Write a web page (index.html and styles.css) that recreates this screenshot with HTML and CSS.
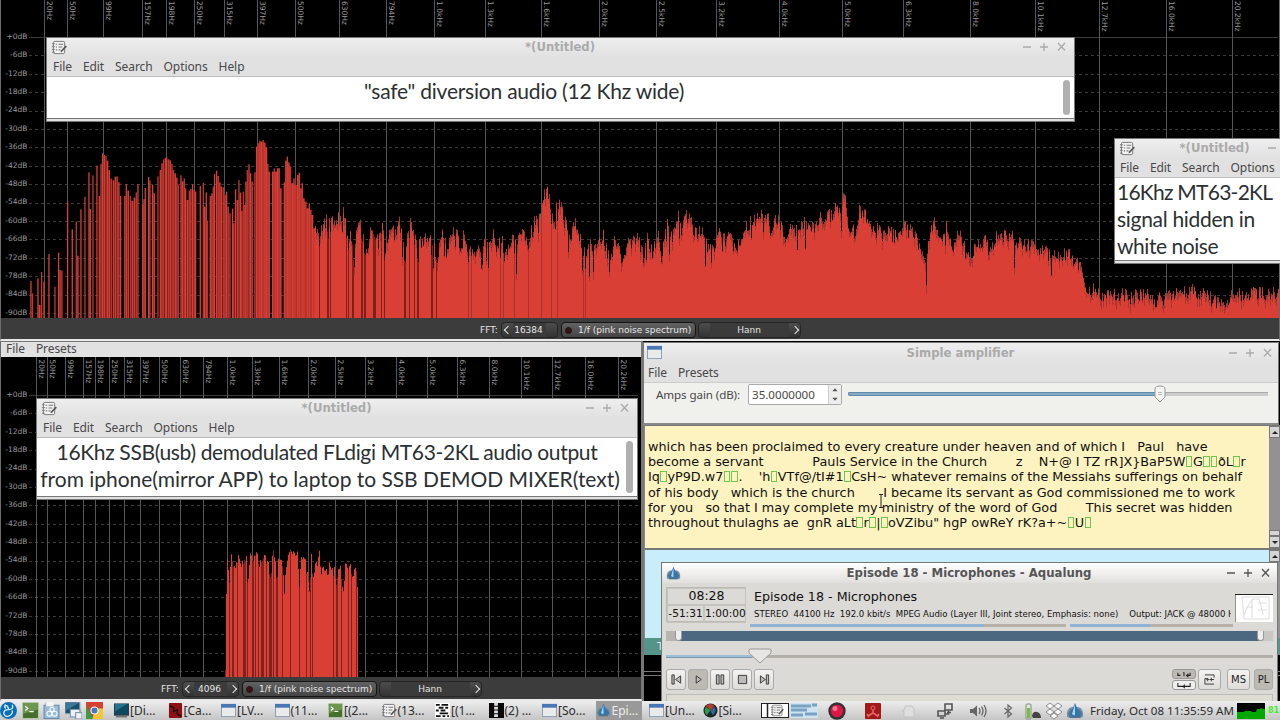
FILE: index.html
```html
<!DOCTYPE html>
<html lang="en">
<head>
    <meta charset="UTF-8">
    <meta name="viewport" content="width=device-width, initial-scale=1.0">
    <title>Desktop</title>
    <link rel="stylesheet" href="styles.css">
</head>
<body>
    <!-- shared icons -->
    <svg class="defs" width="0" height="0">
        <symbol id="i-note" viewBox="0 0 16 16">
            <rect x="1.5" y="1.5" width="12" height="13" rx="1.5" fill="#f2f2f2" stroke="#777"/>
            <path d="M0 4h3M0 7h3M0 10h3M0 13h3" stroke="#777"/>
            <path d="M4 4.5h1.5M7 4.5h5M4 7.5h1.5M7 7.5h4M4 10.5h1.5M7 10.5h2" stroke="#777" stroke-width="1.2"/>
            <path d="M15.2 6.5L9.5 12.5" stroke="#555" stroke-width="1.8"/>
        </symbol>
        <symbol id="i-win" viewBox="0 0 16 16">
            <rect x=".5" y="1.5" width="15" height="13" fill="#e9eaea" stroke="#8a9bb5"/>
            <rect x="0" y="1" width="16" height="4" fill="#4a76b4"/>
        </symbol>
        <symbol id="i-term" viewBox="0 0 16 16">
            <rect x=".5" y=".5" width="15" height="15" rx="1" fill="#456f2c" stroke="#b7c7a7"/>
            <path d="M1 1h14v6L1 11z" fill="#6d9651"/>
            <path d="M3 4l2.5 2L3 8M7 9h4" fill="none" stroke="#fff" stroke-width="1.2"/>
        </symbol>
        <symbol id="i-aqua" viewBox="0 0 18 16">
            <path d="M1 14Q0 5 6 4h6q6 1 5 10l-3 1H4z" fill="#7893a6"/>
            <path d="M2 11q2-5 4-5h6q2 0 4 5l-2 4H4z" fill="#54738a"/>
            <path d="M9 0L4 12q5 3 10 0z" fill="#2d75b7"/>
            <path d="M9 1L6 11q2 2 3 1z" fill="#a7d4ee"/>
        </symbol>
    </svg>

    <div class="desktop">
        <section class="analyzer analyzer-top">
            <svg class="plot" id="plotTop" width="1280" height="318"></svg>
            <div class="fft-bar">
                <span class="fft-label">FFT:</span>
                <div class="spin"><i class="arrow prev"></i><span>16384</span><i class="arrow"></i></div>
                <div class="toggle"><i class="led"></i><span>1/f (pink noise spectrum)</span></div>
                <div class="spin wide"><i class="arrow"></i><span>Hann</span><i class="arrow next"></i></div>
            </div>
        </section>

        <section class="analyzer analyzer-bottom">
            <nav class="menu"><span>File</span><span>Presets</span></nav>
            <svg class="plot" id="plotBottom" width="640" height="320"></svg>
            <div class="fft-bar">
                <span class="fft-label">FFT:</span>
                <div class="spin"><i class="arrow prev"></i><span>4096</span><i class="arrow next"></i></div>
                <div class="toggle"><i class="led"></i><span>1/f (pink noise spectrum)</span></div>
                <div class="spin wide"><i class="arrow"></i><span>Hann</span><i class="arrow next"></i></div>
            </div>
        </section>

        <section class="window note note-safe">
            <header class="titlebar">
                <svg class="app-icon"><use href="#i-note"/></svg>
                <h2>*(Untitled)</h2>
                <svg class="controls" viewBox="0 0 46 12"><path d="M2 6h8M19 6h8M23 2v8M37 2l7 7.500M44 2l-7 7.500"/></svg>
            </header>
            <nav class="menu"><span>File</span><span>Edit</span><span>Search</span><span>Options</span><span>Help</span></nav>
            <div class="note-body"><p><span>"safe" diversion audio (12 Khz wide)</span></p><i class="scroll"></i></div>
        </section>

        <section class="window note note-hidden">
            <header class="titlebar">
                <svg class="app-icon"><use href="#i-note"/></svg>
                <h2>*(Untitled)</h2>
                <svg class="controls" viewBox="0 0 46 12"><path d="M2 6h8M19 6h8M23 2v8M37 2l7 7.500M44 2l-7 7.500"/></svg>
            </header>
            <nav class="menu"><span>File</span><span>Edit</span><span>Search</span><span>Options</span></nav>
            <div class="note-body"><p><span class="h1">16Khz MT63-2KL</span><br><span class="h2">signal hidden in</span><br><span class="h3">white noise</span></p></div>
        </section>

        <section class="window note note-ssb">
            <header class="titlebar">
                <svg class="app-icon"><use href="#i-note"/></svg>
                <h2>*(Untitled)</h2>
                <svg class="controls" viewBox="0 0 46 12"><path d="M2 6h8M19 6h8M23 2v8M37 2l7 7.500M44 2l-7 7.500"/></svg>
            </header>
            <nav class="menu"><span>File</span><span>Edit</span><span>Search</span><span>Options</span><span>Help</span></nav>
            <div class="note-body"><p><span class="s1">16Khz SSB(usb) demodulated FLdigi MT63-2KL audio output</span><br><span class="s2">from iphone(mirror APP) to laptop to SSB DEMOD MIXER(text)</span></p><i class="scroll"></i></div>
        </section>

        <section class="fldigi">
            <div class="pane rx">
                <div class="received">
                    <p>which has been proclaimed to every creature under heaven and of which I   Paul   have</p>
                    <p>become a servant            Pauls Service in the Church       z    N+@ I TZ rR]X}BaP5W<b></b>G<b></b><b></b>ðL<b></b>r</p>
                    <p>Iq<b></b>yP9D.w7<b></b><b></b>.    'h<b></b>VTf@/tI#1<b></b>CsH~ whatever remains of the Messiahs sufferings on behalf</p>
                    <p>of his body   which is the church       I became its servant as God commissioned me to work</p>
                    <p>for you   so that I may complete my ministry of the word of God       This secret was hidden</p>
                    <p>throughout thulaghs ae  gnR aLt<b></b>r<b></b>|<b></b>oVZibu" hgP owReY rK?a+~<b></b>U<b></b></p>
                </div>
                <div class="scroller"><i class="up"></i><i class="thumb"></i><i class="down"></i></div>
            </div>
            <div class="pane tx"><div class="scroller"><i class="up"></i></div></div>
            <div class="tx-bar">T</div>
            <div class="waterfall"></div>
            <svg class="caret" viewBox="0 0 6 14"><path d="M1 .5h4M3 .5v13M1 13.500h4"/></svg>
        </section>

        <section class="window amp">
            <header class="titlebar">
                <svg class="app-icon"><use href="#i-win"/></svg>
                <h2>Simple amplifier</h2>
                <svg class="controls" viewBox="0 0 46 12"><path d="M2 6h8M19 6h8M23 2v8M37 2l7 7.500M44 2l-7 7.500"/></svg>
            </header>
            <nav class="menu"><span>File</span><span>Presets</span></nav>
            <div class="gain">
                <label>Amps gain (dB):</label>
                <div class="number"><span>35.0000000</span><svg viewBox="0 0 10 18"><path d="M2.500 6h5L5 3zM2.500 12h5L5 15z"/></svg></div>
                <div class="slider"><i class="fill"></i><svg class="knob" viewBox="0 0 12 18"><path d="M1 4q0-3 5-3t5 3v8l-5 5-5-5z" fill="#f4f4f2" stroke="#999"/><path d="M4 7.500h4M4 9.500h4" stroke="#bbb"/></svg></div>
            </div>
        </section>

        <section class="window aqualung">
            <header class="titlebar">
                <svg class="app-icon"><use href="#i-aqua"/></svg>
                <h2>Episode 18 - Microphones - Aqualung</h2>
                <svg class="controls" viewBox="0 0 46 12"><path d="M2 6h8M19 6h8M23 2v8M37 2l7 7.500M44 2l-7 7.500"/></svg>
            </header>
            <div class="track">
                <div class="time"><div>08:28</div><div>-51:31</div><div>1:00:00</div></div>
                <div class="info">
                    <div class="name">Episode 18 - Microphones</div>
                    <div class="meta"><span>STEREO&nbsp; 44100 Hz&nbsp; 192.0 kbit/s&nbsp; MPEG Audio (Layer III, Joint stereo, Emphasis: none)</span><span>Output: JACK @ 48000 H</span></div>
                    <div class="levels"><i class="vol"></i><i class="bal"></i></div>
                </div>
                <svg class="cover" viewBox="0 0 38 28"><rect width="38" height="28" fill="#fff"/><path d="M0 28V.5h38" fill="none" stroke="#222"/><path d="M7 3h27v22H9zM9 21q5-13 9-16h6q2 5 4 16M17 5v19M12 13h6M23 9h9M23 16h9" fill="none" stroke="#ddd"/></svg>
            </div>
            <div class="loop"><i></i><i></i></div>
            <div class="seek"><i class="fill"></i><svg class="knob" viewBox="0 0 24 16"><path d="M1 5V2q0-1 2-1h18q2 0 2 1v3L12 15z" fill="#e7e6e3" stroke="#999"/></svg></div>
            <div class="buttons">
                <span class="btn"><svg viewBox="0 0 12 12"><path d="M1 1h2.500v10H1zM10.500 2v8L5 6z"/></svg></span>
                <span class="btn on"><svg viewBox="0 0 12 12"><path d="M3.500 2v8L9 6z"/></svg></span>
                <span class="btn"><svg viewBox="0 0 12 12"><path d="M1.500 1h3v10h-3zM6.500 1h3v10h-3z"/></svg></span>
                <span class="btn"><svg viewBox="0 0 12 12"><path d="M1.500 1.500h9v9h-9z"/></svg></span>
                <span class="btn"><svg viewBox="0 0 12 12"><path d="M1.500 2v8L7 6zM8 1h2.500v10H8z"/></svg></span>
                <span class="spacer"></span>
                <span class="repeat">
                    <i class="on"><svg viewBox="0 0 16 8"><path d="M1 2v3h3M15 2v3h-4M13 3l-2 2 2 2M7 2h1v4"/></svg></i>
                    <i><svg viewBox="0 0 16 8"><path d="M1 1v4h14V1M9 3L7 5l2 2"/></svg></i>
                </span>
                <span class="btn shuffle"><svg viewBox="0 0 12 12"><path d="M1 1h10v3M11 11H1V5h3v3M2.500 6.500L4 5l1.500 1.500M8 4v4M6 6h5" fill="none"/></svg></span>
                <span class="btn text">MS</span>
                <span class="btn text on pl">PL</span>
            </div>
            <div class="playlist"></div>
        </section>

        <footer class="taskbar">
            <div class="launchers">
                <svg viewBox="0 0 18 18"><circle cx="9" cy="9" r="9" fill="#0b6eb5"/><path d="M5 3q4 1 4 5M13 3q2 5-4 5-5 0-5 4 1 4 5 3 5-2 4-6M6 7q-2-2 0-4" fill="none" stroke="#d7efff" stroke-width="1.400"/></svg>
                <svg viewBox="0 0 16 16"><use href="#i-term"/></svg>
                <svg viewBox="0 0 16 16"><path d="M1 3h2V1h6v2h6v12.500H1z" fill="#9bbcd6" stroke="#6589a5"/><rect x="3" y="0" width="7" height="4" fill="#f4f6f8"/><circle cx="6" cy="11" r="2.300" fill="none" stroke="#f5fbff"/><circle cx="11" cy="11" r="2.300" fill="none" stroke="#f5fbff"/><circle cx="8.500" cy="7" r="2" fill="none" stroke="#f5fbff"/></svg>
                <svg viewBox="0 0 16 16"><rect width="14" height="11" fill="#174e6c" stroke="#8ca6b4"/><path d="M1 1h12L1 8z" fill="#3b7898"/><rect x="5" y="7" width="9" height="7" fill="#eef1f5" stroke="#7892ad"/><rect x="10" y="10" width="6" height="6" fill="#eef1f5" stroke="#7892ad"/></svg>
                <svg viewBox="0 0 16 16"><rect width="16" height="16" fill="#d5402f"/><path d="M0 3l7 13H0z" fill="#3b9c48"/><path d="M9 6h7v10H6z" fill="#f1c736"/><circle cx="8" cy="8" r="3.800" fill="#fff"/><circle cx="8" cy="8" r="2.800" fill="#3f79c4"/></svg>
            </div>
            <div class="tasks">
                <span><svg viewBox="0 0 16 16"><rect x=".5" y="1" width="15" height="12" fill="#0e4760" stroke="#29363e"/><path d="M1 1h13L1 9z" fill="#24718b"/><path d="M2 14.500h12" stroke="#777" stroke-width="2"/></svg>[Di...</span>
                <span><svg viewBox="0 0 16 16"><rect x="1" width="14" height="16" rx="1" fill="#8c1116"/><path d="M2 3l4 2v4l4-2v5l4 2" fill="none" stroke="#1d0606" stroke-width="1.500"/></svg>[Ca...</span>
                <span><svg viewBox="0 0 16 16"><use href="#i-win"/></svg>[LV...</span>
                <span><svg viewBox="0 0 16 16"><use href="#i-win"/></svg>(11...</span>
                <span><svg viewBox="0 0 16 16"><use href="#i-term"/></svg>[(2...</span>
                <span><svg viewBox="0 0 16 16"><use href="#i-note"/></svg>(13...</span>
                <span><svg viewBox="0 0 16 16"><rect width="16" height="16" fill="#fff"/><path d="M1 2h4M7 2h7M4 5h5M11 5h3M1 8h3M6 8h5M5 11h9M1 14h5M8 14h3M13 14h2" stroke="#111" stroke-width="2"/></svg>[(1...</span>
                <span><svg viewBox="0 0 16 16"><rect width="16" height="16" fill="#090909"/><path d="M7.500 0v16" stroke="#ddd" stroke-width="4" stroke-dasharray="3 1"/></svg>(2) ...</span>
                <span><svg viewBox="0 0 16 16"><use href="#i-win"/></svg>[So...</span>
                <span class="active"><svg viewBox="0 0 18 16"><use href="#i-aqua"/></svg>Epi...</span>
                <span><svg viewBox="0 0 16 16"><use href="#i-win"/></svg>[Un...</span>
                <span><svg viewBox="0 0 16 16"><circle cx="8" cy="8" r="7.500" fill="#1b2528"/><path d="M8 8L3 3q5-4 9 0z" fill="#b83d2c"/><path d="M8 8l-5-4q-3 5 1 9z" fill="#2d9b48"/><path d="M8 8l4-4q4 5-2 9z" fill="#2d66a0"/></svg>[Si...</span>
            </div>
            <svg class="pager" viewBox="0 0 57 17"><rect x=".5" y="1.500" width="27" height="14" fill="#fff" stroke="#222"/><path d="M6.500 1v15" stroke="#222" stroke-width="1.500"/><rect x="29" y="1" width="28" height="15" fill="#cfe3f0"/><path d="M30 4h20M30 8h16M30 13h12M44 12h12M51 3h5" stroke="#7aa3c3" stroke-width="3"/><svg x="10" y="2" width="13" height="13"><use href="#i-note"/></svg></svg>
            <div class="tray">
                <svg viewBox="0 0 18 18"><circle cx="9" cy="9" r="8.700" fill="#333"/><circle cx="9" cy="9" r="6.200" fill="#e01645"/><circle cx="7" cy="6.500" r="2.500" fill="#fa7290"/></svg>
                <svg viewBox="0 0 18 18"><rect x="1" y="1" width="16" height="16" rx="1" fill="#a3171b"/><circle cx="9" cy="6" r="2" fill="none" stroke="#e8686a"/><path d="M9 8v3l-5 3M9 11l5 3M3 12l2 3M15 12l-2 3" stroke="#e8686a" stroke-width="1.500" fill="none"/></svg>
                <svg viewBox="0 0 18 18"><path d="M5 4h7l2 3v8H4V9H2l3-2z" fill="#dedede" stroke="#c2c2c2"/></svg>
                <svg viewBox="0 0 18 18"><g fill="none" stroke="#555" stroke-width="1.600"><path d="M9 2h7v6H9zM2 9h7v5H2zM12.500 8v4H9M4 16h4M11 10.500h4"/></g></svg>
                <svg viewBox="0 0 18 18"><path d="M1 7h3l4-3.500v11L4 11H1z" fill="#666"/><path d="M10 6q2 3 0 6M12.500 4.500q3 4.500 0 9M15 3q4 6 0 12" fill="none" stroke="#666" stroke-width="1.300"/></svg>
                <svg viewBox="0 0 18 18"><path d="M3.500 6l7 6L7 15V3l3.500 3-7 6" fill="none" stroke="#666" stroke-width="1.200"/></svg>
                <svg viewBox="0 0 18 18"><rect x="2" y="2" width="5" height="15" rx="1" fill="#d9ecc6" stroke="#888"/><rect x="3" y="6" width="3" height="10" fill="#76bd42"/><path d="M8 14q1-5 5-4t4 6H9z" fill="#444"/></svg>
                <svg viewBox="0 0 18 18"><path d="M5 1l4 3-4 3-4-3zM13 1l4 3-4 3-4-3zM5 7l4 3-4 3-4-3zM13 7l4 3-4 3-4-3zM9 11l4 3-4 3-4-3z" fill="#f7f7f7" stroke="#777" stroke-width=".8"/></svg>
                <svg viewBox="0 0 18 16"><use href="#i-aqua"/></svg>
            </div>
            <time>Friday, Oct 08 11:35:59 AM</time>
            <svg class="cpu" viewBox="0 0 28 16"><rect width="28" height="16" fill="#000"/><path d="M0 16V9h7l1-1h6l1 1h4l1-3h3l1-1 2 1h2v10z" fill="#00a800"/></svg>
            <span class="temp">81</span>
        </footer>
    </div>
    <script src="spectrum.js"></script>
</body>
</html>
```
FILE: styles.css
```css
* {
    margin: 0;
    padding: 0;
    box-sizing: border-box;
}

body {
    width: 1280px;
    height: 720px;
    overflow: hidden;
    background: #000;
    font-family: "DejaVu Sans", sans-serif;
}

i {
    font-style: normal;
}

.defs {
    position: absolute;
}

.desktop {
    position: relative;
    width: 1280px;
    height: 720px;
    overflow: hidden;
}

/* spectrum analyzers */
.analyzer {
    position: absolute;
    left: 0;
    display: flex;
    flex-direction: column;
    background: #000;
    border-left: 1px solid #6b6b6b;
    border-bottom: 2px solid #e8e8e8;
}

.analyzer-top {
    top: 0;
    width: 1280px;
    height: 341px;
    border-right: 1px solid #6b6b6b;
}

.analyzer-bottom {
    top: 341px;
    width: 643px;
    height: 360px;
    border-top: 1px solid #777;
    border-right: 2px solid #777;
}

.plot {
    display: block;
    flex: none;
    margin-left: -1px;
}

.plot text {
    font-size: 7.5px;
    fill: #999;
}

.fft-bar {
    flex: 1;
    display: flex;
    align-items: center;
    padding: 3px 0 0 479px;
    gap: 3px;
    background: #3c3c3c;
    color: #e6e6e6;
    font-size: 9px;
}

.analyzer-bottom .fft-bar {
    padding-left: 160px;
    padding-top: 2px;
}

.fft-label {
    width: 18px;
    white-space: nowrap;
}

.spin,
.toggle {
    display: flex;
    align-items: center;
    height: 16px;
    border: 1px solid #252525;
    border-radius: 4px;
    background: linear-gradient(#4d4d4d, #333);
    white-space: nowrap;
}

.spin {
    width: 57px;
    justify-content: space-between;
}

.spin span {
    flex: 1;
    text-align: center;
    line-height: 14px;
    padding-right: 2px;
    background: #3b3b3b;
}

.spin.wide {
    width: 103px;
    margin-left: -1px;
}

.spin.wide span {
    padding-right: 1px;
}

.arrow {
    display: flex;
    align-items: center;
    justify-content: center;
    width: 11px;
    height: 14px;
}

.prev::before,
.next::before {
    content: "";
    width: 5px;
    height: 5px;
    border: solid #e6e6e6;
    border-width: 0 0 1.5px 1.5px;
    transform: rotate(45deg);
}

.next::before {
    transform: rotate(225deg);
}

.toggle {
    width: 135px;
    gap: 6px;
    padding-left: 3px;
    border: 1.5px solid #151515;
    background: linear-gradient(#626262, #444);
}

.led {
    width: 7px;
    height: 7px;
    border-radius: 50%;
    background: #381317;
    border: 1px solid #241214;
}

/* windows */
.window {
    position: absolute;
    display: flex;
    flex-direction: column;
    background: #e1e1e1;
    border: 1px solid #777;
}

.titlebar {
    display: flex;
    align-items: center;
    flex: none;
    height: 19px;
    padding: 0 7px 1px 5px;
    background: linear-gradient(#eee, #e1e1e1);
}

.titlebar h2 {
    flex: 1;
    padding-left: 32px;
    text-align: center;
    font-size: 11.7px;
    color: #aaa;
    white-space: nowrap;
}

.app-icon {
    width: 15px;
    height: 15px;
}

.controls {
    width: 46px;
    height: 12px;
    fill: none;
    stroke: #aaa;
    stroke-width: 1.3;
}

.menu {
    display: flex;
    flex: none;
    align-items: center;
    gap: 11px;
    height: 19px;
    padding-left: 6px;
    background: #e1e1e1;
    color: #484848;
    font-family: "Noto Sans", sans-serif;
    font-size: 12px;
    letter-spacing: -.08px;
}

.analyzer-bottom .menu {
    height: 15px;
    padding: 0 0 2px 5px;
}

.note-body {
    display: flex;
    flex: 1;
    background: #fff;
    border-top: 1px solid #bbb;
    border-bottom: 1px solid #777;
    margin-bottom: 2px;
    color: #2c3032;
    font-family: Lato, sans-serif;
    font-size: 21px;
    line-height: 27px;
    white-space: nowrap;
}

.note-body p {
    flex: 1;
    text-align: center;
}

.scroll {
    width: 7px;
    margin: 3px 4px 3px 0;
    border-radius: 4px;
    background: #b0b0b0;
}

.note-safe {
    left: 46px;
    top: 37px;
    width: 1029px;
    height: 85px;
}

.note-safe p {
    padding: 0 62px 0 0;
    letter-spacing: -.22px;
}

.note-hidden {
    left: 1114px;
    top: 138px;
    width: 220px;
    height: 126px;
}

.note-hidden h2 {
    padding-left: 28px;
}

.note-hidden .controls {
    margin-right: 14px;
}

.note-hidden .menu {
    padding-left: 5px;
}

.note-hidden p {
    text-align: left;
    padding-left: 2px;
}

.note-hidden .h1 {
    letter-spacing: -.75px;
}

.note-hidden .h2 {
    letter-spacing: -.3px;
}

.note-hidden .h3 {
    letter-spacing: -.45px;
}

.note-ssb {
    left: 36px;
    top: 398px;
    width: 602px;
    height: 102px;
}

.note-ssb p {
    padding-right: 3px;
}

.note-ssb .s1 {
    margin-right: 6px;
    letter-spacing: -.35px;
}

.note-ssb .s2 {
    letter-spacing: -.03px;
}

/* fldigi */
.fldigi {
    position: absolute;
    left: 642px;
    top: 425px;
    width: 638px;
    height: 276px;
    display: flex;
    flex-direction: column;
    border-left: 2px solid #777;
    background: #000;
}

.pane {
    display: flex;
    justify-content: space-between;
    border-top: 1px solid #777;
    border-left: 1px solid #888;
}

.rx {
    height: 123px;
    background: #fdf3c0;
}

.received {
    padding: 13px 0 0 3px;
    color: #111;
    font-size: 12.8px;
    line-height: 15.2px;
    white-space: pre;
}

.received p {
    height: 15.2px;
}

.rx .received {
    display: flex;
    flex-direction: column;
}

.received b {
    display: inline-block;
    width: 6.5px;
    height: 11px;
    margin: 0 .5px;
    border: 1px solid #6cc74c;
    vertical-align: -1px;
}

.tx {
    justify-content: flex-end;
    height: 90px;
    background: #c8eefc;
    border-top: 2px solid #777;
}

.scroller {
    display: flex;
    flex-direction: column;
    width: 11px;
    background: #929292;
}

.scroller i {
    display: flex;
    align-items: center;
    justify-content: center;
    height: 12px;
    border: 1px solid #777;
    background: #d5d5d5;
}

.up::before,
.down::before {
    content: "";
    border: 3px solid transparent;
    border-top: 0;
    border-bottom: 3px solid #222;
}

.down::before {
    transform: rotate(180deg);
}

.scroller .thumb {
    height: 6px;
    margin-top: auto;
}

.tx-bar {
    height: 17px;
    padding-left: 13px;
    background: #549489;
    color: #d6efe8;
    font-size: 11px;
    line-height: 17px;
}

.waterfall {
    flex: 1;
    background: linear-gradient(#000 16px, #777 16px, #777 17px, #000 17px, #000 20px, #777 20px, #777 21px, #000 21px);
}

.caret {
    position: absolute;
    left: 234px;
    top: 69px;
    width: 6px;
    height: 14px;
    fill: none;
    stroke: #222;
}

/* amplifier */
.amp {
    left: 642px;
    top: 342px;
    width: 637px;
    height: 83px;
    border-left-width: 2px;
    background: #f0f0ed;
    border-bottom: 2px solid #888;
}

.amp .titlebar {
    height: 20px;
    padding: 0 5px 1px 3px;
}

.amp .menu {
    height: 20px;
    padding-left: 4px;
    border-bottom: 1px solid #ccc;
}

.gain {
    display: flex;
    align-items: center;
    height: 24px;
    margin-top: -1px;
    padding: 0 10px 0 12px;
    color: #484848;
    font-family: "Noto Sans", sans-serif;
    font-size: 11.6px;
    white-space: nowrap;
}

.gain label {
    width: 92px;
    letter-spacing: -.1px;
}

.number {
    display: flex;
    width: 94px;
    height: 21px;
    margin-right: 6px;
    border: 1px solid #aaa;
    border-radius: 2px;
    background: #fff;
    line-height: 19px;
}

.number span {
    flex: 1;
    padding-left: 3px;
    border-right: 1px solid #ccc;
}

.number svg {
    width: 12px;
    height: 19px;
    fill: #555;
    background: #eee;
}

.slider {
    position: relative;
    flex: 1;
    height: 4px;
    background: #ccc;
    border-top: 1px solid #aaa;
}

.slider .fill {
    position: absolute;
    left: 0;
    top: -1px;
    width: 312px;
    height: 4px;
    background: #85aac6;
    border: 1px solid #608aa9;
    border-radius: 2px;
}

.slider .knob {
    position: absolute;
    left: 306px;
    top: -8px;
    width: 12px;
    height: 18px;
}

/* aqualung */
.aqualung {
    left: 661px;
    top: 562px;
    width: 617px;
    height: 150px;
    background: #dcdad6;
}

.aqualung .titlebar {
    height: 20px;
    padding: 0 6px 0 4px;
    background: linear-gradient(#fff, #e0dfdc);
}

.aqualung h2 {
    color: #555;
}

.aqualung .controls {
    stroke: #555;
}

.track {
    display: flex;
    flex: none;
    height: 44px;
    padding: 4px 4px 0;
    color: #111;
}

.time {
    display: grid;
    grid-template-columns: 37px 42px;
    grid-template-rows: 17px 18px;
    width: 80px;
    height: 35px;
    border: 1px solid #bcbab5;
    text-align: center;
    font-size: 10.6px;
    line-height: 15px;
}

.time div {
    border: 1px solid #c5c3be;
}

.time div:first-child {
    grid-column: 1 / 3;
    font-size: 12.5px;
    line-height: 13px;
}

.info {
    flex: 1;
    min-width: 0;
    padding-left: 4px;
}

.name {
    padding-left: 4px;
    font-size: 12.7px;
    line-height: 19px;
}

.meta {
    display: flex;
    gap: 11px;
    width: 477px;
    margin-left: 4px;
    overflow: hidden;
    font-size: 8.55px;
    line-height: 16px;
    white-space: nowrap;
}

.levels {
    display: flex;
    gap: 4px;
    padding-top: 2px;
}

.levels i {
    width: 316px;
    height: 3px;
    background: linear-gradient(90deg, #8fb3d2 74%, #b8b1aa 74%);
}

.levels .bal {
    width: 163px;
    background: linear-gradient(90deg, #8fb3d2 50%, #b8b1aa 50%);
}

.cover {
    width: 38px;
    height: 28px;
    margin-top: 7px;
}

.loop {
    display: flex;
    flex: none;
    justify-content: space-between;
    height: 10px;
    margin: 4px 4px 0;
    padding: 0 9px;
    background: linear-gradient(90deg, #b9b5ae 12px, #4c6880 12px, #4c6880 595px, #c9c7c3 595px);
}

.loop i {
    width: 7px;
    height: 10px;
    background: #eee;
    border: 1px solid #999;
    border-top: 0;
    border-radius: 0 0 4px 4px;
}

.seek {
    position: relative;
    flex: none;
    height: 3px;
    margin: 14px 4px 0;
    background: #b1afa8;
}

.seek .fill {
    display: block;
    width: 86px;
    height: 3px;
    background: #9fbfd8;
    border-bottom: 1px solid #7898b0;
}

.seek .knob {
    position: absolute;
    left: 82px;
    top: -7px;
    width: 24px;
    height: 16px;
}

.buttons {
    display: flex;
    flex: none;
    gap: 2px;
    margin: 11px 4px 0;
}

.btn {
    display: flex;
    align-items: center;
    justify-content: center;
    width: 20px;
    height: 21px;
    border: 1px solid #aaa;
    border-radius: 3px;
    background: linear-gradient(#f3f3f1, #dedcd8);
}

.btn svg {
    width: 11px;
    height: 11px;
    fill: #bbb;
    stroke: #333;
    stroke-width: 1;
}

.btn.on,
.repeat .on {
    background: #bdbab4;
}

.btn.text {
    width: 23px;
    margin-left: 4px;
    color: #222;
    font-size: 10px;
}

.btn.pl {
    width: 19px;
    margin-left: 2px;
}

.spacer {
    flex: 1;
}

.repeat {
    display: flex;
    flex-direction: column;
    gap: 1px;
    width: 24px;
}

.repeat i {
    display: flex;
    align-items: center;
    justify-content: center;
    height: 10px;
    border: 1px solid #999;
    border-radius: 3px;
    background: #eee;
}

.repeat svg {
    width: 14px;
    height: 7px;
    fill: none;
    stroke: #222;
    stroke-width: 1.2;
}

.shuffle {
    width: 23px;
}

.playlist {
    flex: 1;
    margin: 4px 4px 0;
    border: 1px solid #bbb;
    background: #deddd3;
}

/* taskbar */
.taskbar {
    position: absolute;
    left: 0;
    top: 701px;
    width: 1280px;
    height: 19px;
    display: flex;
    align-items: center;
    background: linear-gradient(#ededed, #c5c5c5);
    color: #2c2c2c;
    font-family: "Noto Sans", sans-serif;
    font-size: 12px;
    white-space: nowrap;
}

.launchers {
    display: flex;
    flex: none;
    gap: 4.5px;
    width: 114px;
}

.launchers svg {
    width: 17px;
    height: 17px;
}

.tasks {
    display: flex;
    flex: none;
    width: 647px;
}

.tasks span {
    display: flex;
    align-items: center;
    gap: 1px;
    flex: none;
    width: 53.5px;
    height: 19px;
}

.tasks svg {
    flex: none;
    width: 15px;
    height: 15px;
}

.tasks .active {
    width: 46px;
    margin-right: 7.5px;
    background: #999;
    color: #eee;
}

.pager {
    flex: none;
    width: 57px;
    height: 17px;
}

.tray {
    display: flex;
    flex: none;
    width: 272px;
    height: 18px;
}

.tray svg {
    flex: none;
    width: 18px;
    height: 18px;
    margin-left: 18px;
}

.tray svg:nth-child(1) {
    margin-left: 10px;
}

.tray svg:nth-child(5) {
    margin-left: 15px;
}

.tray svg:nth-child(6) {
    margin-left: 14px;
}

.tray svg:nth-child(7) {
    margin-left: 5px;
}

.tray svg:nth-child(n+8) {
    margin-left: 3px;
}

time {
    flex: none;
    width: 147px;
    font-size: 11.6px;
}

.cpu {
    flex: none;
    width: 28px;
    height: 16px;
    margin-right: 3px;
}

.temp {
    color: #3ff02c;
    font-family: "DejaVu Sans", sans-serif;
    font-size: 8px;
    font-weight: bold;
}
```
FILE: spectrum.js
```js
const NS = 'http://www.w3.org/2000/svg';
const FREQS = ['20Hz', '50Hz', '99Hz', '157Hz', '198Hz', '250Hz', '315Hz', '397Hz', '500Hz', '630Hz', '794Hz',
    '1.0kHz', '1.3kHz', '1.6kHz', '2.0kHz', '2.5kHz', '3.2kHz', '4.0kHz', '5.0kHz', '6.3kHz', '8.0kHz',
    '10.1kHz', '12.7kHz', '16.0kHz', '20.2kHz'];

// fixed seed so that the noise is the same on every load
let seed = 7;
function rand() {
    seed = (seed * 16807) % 2147483647;
    return seed / 2147483647;
}

function add(svg, name, attrs, text) {
    const el = document.createElementNS(NS, name);
    for (const key in attrs) el.setAttribute(key, attrs[key]);
    if (text) el.textContent = text;
    svg.appendChild(el);
}

function drawGrid(svg, xs, zeroY, labelY, width, height) {
    for (let i = 0; i <= 15; i++) {
        const y = zeroY + i * 18.4;
        add(svg, 'text', { x: 27.5, y: y + 1.8, 'text-anchor': 'end' }, (i ? '-' : '+') + i * 6 + 'dB');
        add(svg, 'line', { x1: 29, x2: width, y1: Math.round(y) + .5, y2: Math.round(y) + .5, stroke: '#3b3b3b', 'stroke-dasharray': i ? '3 3' : 'none' });
    }
    xs.forEach((x, i) => {
        const px = Math.floor(x) + .5;
        add(svg, 'line', { x1: px, x2: px, y1: 0, y2: height, stroke: '#555' });
        add(svg, 'text', { transform: `translate(${px + 2} ${labelY}) rotate(90)` }, FREQS[i]);
    });
}

function envelope(points, x) {
    let i = 0;
    while (i < points.length - 2 && points[i + 1][0] < x) i++;
    const [x1, y1] = points[i], [x2, y2] = points[i + 1];
    return y1 + (y2 - y1) * (x - x1) / (x2 - x1);
}

function bar(svg, x, y, w, bottom, color) {
    add(svg, 'rect', { x: x, y: y, width: w, height: Math.max(0, bottom - y), fill: color });
}

// low frequencies: separate bins, [x * 3, (y - 150) * 3]
const BINS = [[93,393],[98,430],[114,385],[119,465],[125,366],[132,395],[147,312],[165,410],[176,308],[180,360],[186,362],
    [203,155],[217,238],[229,215],[234,317],[243,178],[255,140],[267,67],[271,177],[279,76],[291,47],[298,138],[303,41],
    [308,10],[313,15],[318,18],[323,32],[328,60],[334,86],[340,91],[346,80],[352,79],[357,97],[362,138],[374,138],[379,102],
    [385,122],[391,138],[397,153],[403,143],[409,127],[414,102],[429,163],[432,147],[436,114],[446,81],[450,92],[458,104],
    [463,130],[474,79],[481,60],[486,40],[491,28],[496,24],[500,20],[506,28],[511,31],[516,42],[521,60],[526,70],[531,83],
    [535,103],[543,76],[548,94],[553,85],[557,115],[563,150],[568,122],[573,117],[578,103],[583,120],[587,125],[601,108],
    [610,98],[614,170],[619,127],[622,212],[631,138],[636,130],[640,110],[644,72],[650,62],[655,78],[660,97],[665,110],
    [670,112],[675,135],[680,125],[685,170],[690,190],[698,176],[701,220],[707,118],[712,150],[717,90],[722,128],[726,183],
    [730,125],[735,165],[738,95],[742,60],[747,43],[752,70],[757,95],[765,67],[770,-10],[775,-20],[780,-28],[785,-25],
    [790,-30],[795,-22],[800,-8],[804,42],[808,65],[818,65],[823,55],[828,65],[833,55],[838,55],[843,115],[853,97],[857,32],
    [862,20],[867,38],[872,50],[877,100],[882,85],[887,105],[893,75],[898,68],[903,115],[907,100],[912,145],[918,155],
    [923,175],[928,160],[933,180],[938,195],[943,235]];

const TOP = [[315,232],[317,224],[320,232],[325,220],[333,217],[337,218],[343,213],[347,228],[353,240],[357,230],[360,211],[364,240],
    [368,250],[371,223],[375,232],[378,240],[381,220],[385,245],[391,222],[394,235],[399,220],[404,252],[409,223],[415,227],
    [418,245],[425,232],[430,240],[433,238],[437,258],[442,225],[446,250],[452,231],[457,235],[460,250],[464,230],[467,247],
    [472,242],[475,262],[478,245],[482,258],[485,232],[488,250],[493,233],[497,250],[502,232],[505,255],[512,231],[516,245],
    [520,235],[526,233],[530,234],[535,217],[540,208],[546,189],[550,203],[553,220],[556,202],[560,203],[563,217],[567,227],
    [571,235],[575,218],[580,238],[586,256],[590,240],[598,240],[603,235],[609,258],[614,242],[617,238],[622,262],[627,243],
    [632,240],[637,233],[642,252],[647,234],[652,252],[658,233],[661,255],[667,225],[672,237],[677,214],[681,224],[686,213],
    [691,222],[696,234],[702,224],[706,242],[713,250],[718,232],[725,238],[729,232],[736,253],[743,228],[749,221],[756,220],
    [761,210],[763,225],[767,206],[770,232],[776,216],[780,224],[785,235],[790,220],[796,230],[801,225],[809,219],[814,230],
    [820,217],[828,216],[835,209],[841,206],[845,188],[848,228],[855,230],[859,210],[862,211],[866,216],[870,228],[878,224],
    [882,233],[890,230],[897,237],[903,223],[908,232],[912,228],[917,239],[922,250],[926,258],[929,235],[935,218],[940,235],
    [946,224],[952,245],[958,232],[965,248],[970,258],[977,243],[984,239],[990,250],[998,230],[1004,235],[1012,234],
    [1018,240],[1028,245],[1034,238],[1040,250],[1050,253],[1058,257],[1068,250],[1074,264],[1080,262],[1083,278],[1086,292],
    [1090,296],[1094,290],[1100,297],[1120,295],[1130,300],[1145,295],[1155,302],[1175,296],[1190,292],[1205,298],[1222,306],
    [1235,296],[1255,296],[1279,294]];

const BOTTOM = [[552,312],[555,108],[558,125],[562,158],[565,90],[570,98],[575,130],[580,100],[585,98],[590,120],[598,98],
    [603,100],[606,165],[612,95],[618,90],[625,90],[629,90],[635,120],[640,88],[645,100],[652,105],[660,125],[663,150],
    [668,72],[672,100],[677,155],[682,100],[690,105],[696,185],[700,120],[705,90],[711,75],[716,92],[722,90],[728,88],
    [732,170],[736,108],[742,90],[748,110],[753,140],[757,185],[762,92],[766,160],[772,112],[776,125],[782,85],[786,150],
    [790,120],[797,130],[803,150],[806,115],[812,125],[818,128],[822,165],[827,130],[834,120],[840,190],[845,120],[850,125],
    [858,110],[862,155],[867,130],[873,128],[877,245]].map(([x, y]) => [x / 2.45, 163 + y / 2.45]);

const topPlot = document.getElementById('plotTop');
drawGrid(topPlot, [44, 67, 103, 142, 166, 194, 224, 257, 295, 339, 386, 434, 485, 541, 599, 656, 716, 779, 842, 903, 970, 1035, 1099, 1166, 1232], 37, 1, 1278, 318);

BINS.forEach(([bx, by], i) => {
    const x = bx / 3, y = 150 + by / 3;
    const next = BINS[i + 1];
    if (next && next[0] - bx < 7 && (i % 4 || bx > 765)) {
        bar(topPlot, x, Math.max(y, 150 + next[1] / 3), (next[0] - bx) / 3, 318, bx > 765 ? '#a92b25' : '#5e1a18');
    }
    bar(topPlot, x - .7, y, 1.3, 318, i % 3 === 1 ? '#b93a35' : '#d93f35');
});

for (let x = 315; x < 1279; x++) {
    const quiet = x > 1088;
    const steep = x > 1078 && !quiet;
    let y = envelope(TOP, x) + (quiet ? rand() * 15 - 9 : steep ? 0 : rand() * 15 - 6);
    const gap = x < 600 && rand() < (x < 440 ? .2 : .07);
    if (gap) {
        bar(topPlot, x, y + 12, 1, 318, x < 440 ? '#7d211d' : '#a6332c');
        continue;
    }
    if (rand() < .06 && !quiet && !steep) y += 8 + rand() * 20;
    bar(topPlot, x, y, 1, 318, '#d93f35');
    bar(topPlot, x, y, 1, y + 9 * rand(), '#a73530');
}

const bottomPlot = document.getElementById('plotBottom');
drawGrid(bottomPlot, [36, 47, 65, 83, 95, 109, 124, 140, 159, 180, 203, 227, 252, 279, 308, 335, 365, 396, 427, 457, 489, 521, 552, 585, 618], 38, 2.5, 638, 320);

for (let x = 225; x < 358; x++) {
    const y = envelope(BOTTOM, x) + rand() * 7 - 7;
    const dark = rand() < (x < 280 ? .3 : .14);
    bar(bottomPlot, x, dark ? y + 5 : y, 1, 320, dark ? '#7d2420' : '#d93f35');
}
```
